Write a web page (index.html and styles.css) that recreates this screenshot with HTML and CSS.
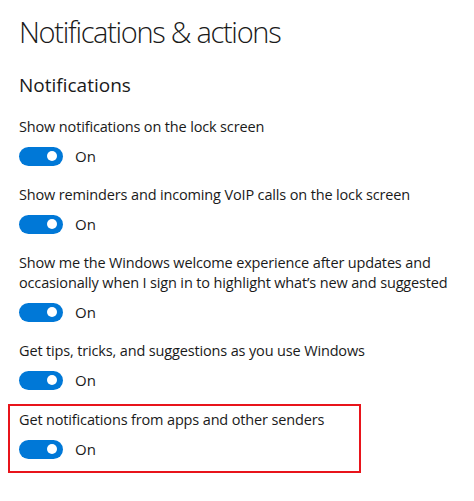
FILE: index.html
```html
<!DOCTYPE html>
<html>
<head>
<meta charset="utf-8">
<link rel="stylesheet" href="styles.css">
</head>
<body>
<main class="page">
  <h1 class="title">Notifications &amp; actions</h1>
  <h2 class="section">Notifications</h2>
  <div class="setting">
    <p class="label">Show notifications on the lock screen</p>
    <div class="toggle-row"><span class="toggle"><span class="knob"></span></span><span class="state">On</span></div>
  </div>
  <div class="setting">
    <p class="label">Show reminders and incoming VoIP calls on the lock screen</p>
    <div class="toggle-row"><span class="toggle"><span class="knob"></span></span><span class="state">On</span></div>
  </div>
  <div class="setting">
    <p class="label">Show me the Windows welcome experience after updates and occasionally when I sign in to highlight what’s new and suggested</p>
    <div class="toggle-row"><span class="toggle"><span class="knob"></span></span><span class="state">On</span></div>
  </div>
  <div class="setting">
    <p class="label">Get tips, tricks, and suggestions as you use Windows</p>
    <div class="toggle-row"><span class="toggle"><span class="knob"></span></span><span class="state">On</span></div>
  </div>
  <div class="setting highlighted">
    <p class="label">Get notifications from apps and other senders</p>
    <div class="toggle-row"><span class="toggle"><span class="knob"></span></span><span class="state">On</span></div>
  </div>
</main>
</body>
</html>
```

FILE: styles.css
```css
html, body {
  margin: 0;
  padding: 0;
  background: #ffffff;
}
body {
  font-family: "Open Sans", "Noto Sans", sans-serif;
  color: #1a1a1a;
}
.page {
  padding: 12px 0 0 19px;
  width: 440px;
}
.title {
  margin: 0;
  font-size: 29px;
  font-weight: 300;
  line-height: 40px;
  letter-spacing: -1.3px;
}
.section {
  margin: 20px 0 0;
  font-size: 19px;
  font-weight: 400;
  line-height: 26px;
}
.setting {
  margin-top: 18px;
}
.section + .setting {
  margin-top: 19px;
}
.label {
  margin: 0;
  font-size: 14.5px;
  line-height: 20px;
  letter-spacing: -0.15px;
  width: 440px;
}
.toggle-row {
  display: flex;
  align-items: center;
  gap: 12px;
  margin-top: 8px;
  height: 22px;
}
.toggle {
  width: 44px;
  height: 19px;
  border-radius: 10px;
  background: #0078d7;
  display: flex;
  align-items: center;
  justify-content: flex-end;
  padding-right: 6px;
  box-sizing: border-box;
}
.knob {
  width: 10px;
  height: 10px;
  border-radius: 50%;
  background: #ffffff;
}
.state {
  font-size: 15px;
  line-height: 20px;
}
.highlighted {
  margin-top: 13px;
  margin-left: -11px;
  padding: 4px 0 11px 9px;
  width: 340px;
  border: 2px solid #e8141b;
}
```
